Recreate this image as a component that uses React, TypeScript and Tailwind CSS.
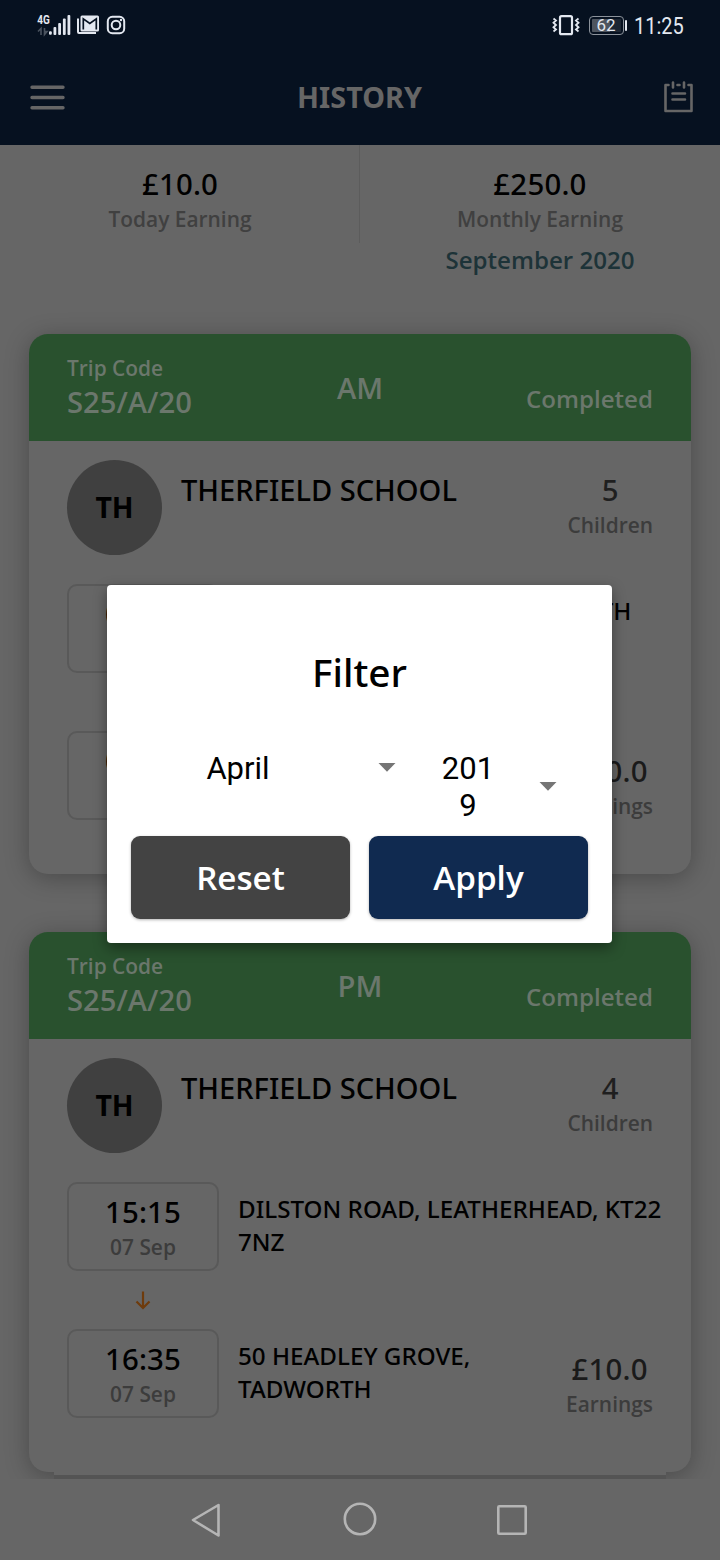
import type { ReactNode } from "react";

type Stop = { time: string; date: string; lines: string[]; indent?: boolean };
type Trip = { code: string; period: string; children: number; from: Stop; to: Stop };

const trips: Trip[] = [
  {
    code: "S25/A/20",
    period: "AM",
    children: 5,
    from: { time: "07:15", date: "07 Sep", lines: ["50 HEADLEY GROVE, TADWORTH"], indent: true },
    to: { time: "08:35", date: "07 Sep", lines: [] },
  },
  {
    code: "S25/A/20",
    period: "PM",
    children: 4,
    from: { time: "15:15", date: "07 Sep", lines: ["DILSTON ROAD, LEATHERHEAD, KT22", "7NZ"] },
    to: { time: "16:35", date: "07 Sep", lines: ["50 HEADLEY GROVE,", "TADWORTH"] },
  },
];

function StatusBar() {
  return (
    <div className="flex h-[50px] items-center justify-between pr-[36px] pl-[36px] text-[#e3e8f0]">
      <svg width="92" height="24" viewBox="36 13 92 24" fill="none">
        <text
          transform="translate(37.300 24.300) scale(0.8 1)"
          fill="#e3e8f0"
          fontFamily="Roboto"
          fontSize="12.5"
          fontWeight="700"
        >
          4G
        </text>
        <path d="M38 31.500l3-3v6.500M44.500 28v6.500l2.500-3h-2" stroke="#4a535f" strokeWidth="1.600" />
        <g fill="#e3e8f0">
          <rect x="49" y="31.200" width="2.800" height="3.600" rx="1" />
          <rect x="53.500" y="27" width="2.800" height="8" rx="1" />
          <rect x="58.200" y="23" width="2.800" height="12" rx="1" />
          <rect x="62.900" y="18.500" width="2.800" height="16.500" rx="1" />
          <rect x="67.500" y="15" width="2.800" height="20" rx="1" />
          <path d="M77 18.500h2v13.500h17v2H79a2 2 0 0 1-2-2z" />
          <rect x="80.500" y="15.500" width="18.500" height="16" rx="1.500" />
        </g>
        <path d="M83.300 29.500V18.800l6.500 4.700 6.500-4.700v10.700" stroke="#061120" strokeWidth="1.700" />
        <rect x="107.800" y="16.800" width="16.400" height="16.400" rx="4.500" stroke="#e3e8f0" strokeWidth="2" />
        <circle cx="116" cy="25" r="4.300" stroke="#e3e8f0" strokeWidth="2" />
        <circle cx="121" cy="20" r="1.200" fill="#e3e8f0" />
      </svg>
      <div className="flex items-center">
        <svg width="28" height="24" viewBox="0 0 28 24" fill="none" stroke="#e3e8f0">
          <rect x="8" y="3.200" width="12" height="18" rx="1.500" strokeWidth="2.200" />
          <path
            d="M1.500 5.500l2.500 2-2.500 2.300 2.500 2.200-2.500 2.300 2.500 2.200-2.500 2M26.500 5.500l-2.500 2 2.500 2.300-2.500 2.200 2.500 2.300-2.500 2.200 2.500 2"
            strokeWidth="1.800"
          />
        </svg>
        <div className="ml-[9px] flex h-[19px] w-[35px] items-center justify-center rounded-[4px] border border-[#8b929b] bg-[#1c2633] bg-[linear-gradient(90deg,#4e555f_62%,#1c2633_62%)] bg-clip-content p-[2px] font-['Roboto',sans-serif] text-[17px] leading-none">
          62
        </div>
        <div className="ml-[1px] h-[11px] w-[2.500px] rounded-[1px] bg-[#e3e8f0]" />
        <div className="mt-[2px] ml-[7px] w-[50px] font-['Roboto',sans-serif] text-[24px] leading-[28px] whitespace-nowrap">
          <span className="inline-block origin-left scale-x-[0.83]">11:25</span>
        </div>
      </div>
    </div>
  );
}

function Header() {
  return (
    <header className="h-[145px] bg-[#061120]">
      <StatusBar />
      <div className="grid h-[93px] grid-cols-[1fr_auto_1fr] items-center pr-[26px] pl-[30px]">
        <svg width="35" height="26" viewBox="0 0 35 26" stroke="#666" strokeWidth="3.400" strokeLinecap="round">
          <path d="M2 3.200h31M2 13.500h31M2 23.800h31" />
        </svg>
        <h1 className="mr-[1px] -ml-[1px] pr-[3px] text-[28.800px] leading-[38px] font-bold text-[#666]">HISTORY</h1>
        <svg
          className="-mt-[1px] justify-self-end"
          width="31"
          height="34"
          viewBox="0 0 31 34"
          fill="none"
          stroke="#666"
          strokeWidth="2.600"
          strokeLinecap="round"
          strokeLinejoin="round"
        >
          <path d="M5.500 6H2.500v26h26V6H25.500M14.500 6h2" />
          <path d="M10 3.500v5M21 3.500v5M9.500 14.500h12.500M9.500 20.500h12.500" />
        </svg>
      </div>
    </header>
  );
}

function Stat({ value, label, children }: { value: string; label: string; children?: ReactNode }) {
  return (
    <div className="flex w-[360px] flex-col items-center pt-[20px]">
      <div className="text-[29.400px] leading-[38px] font-medium tracking-[0.200px] text-black">{value}</div>
      <div className="mt-[1px] font-['Open_Sans',sans-serif] text-[20.900px] leading-[31px] font-semibold text-[#404040]">
        {label}
      </div>
      {children}
    </div>
  );
}

function Caption({ children }: { children: ReactNode }) {
  return (
    <div className="font-['Open_Sans',sans-serif] text-[20.900px] leading-[32px] font-semibold text-[#3c3c3c]">
      {children}
    </div>
  );
}

function StopRow({ stop, earnings }: { stop: Stop; earnings?: string }) {
  return (
    <div className="flex h-[89px]">
      <div className="flex w-[152px] shrink-0 flex-col items-center rounded-[10px] border-2 border-[#595959] pt-[9px]">
        <div className="text-[29.400px] leading-[38px] font-medium tracking-[0.200px] text-black">{stop.time}</div>
        <Caption>{stop.date}</Caption>
      </div>
      <div className={stop.indent ? "ml-[40px] pt-[10px]" : "ml-[19px] pt-[10px]"}>
        {stop.lines.map((line) => (
          <div key={line} className="text-[24.200px] leading-[33px] font-medium whitespace-nowrap text-black">
            {line}
          </div>
        ))}
      </div>
      {earnings && (
        <div className="ml-auto flex flex-col items-center pt-[21px]">
          <div className="text-[29.400px] leading-[38px] font-medium tracking-[0.200px] text-[#1a1a1a]">{earnings}</div>
          <Caption>Earnings</Caption>
        </div>
      )}
    </div>
  );
}

function TripCard({ trip }: { trip: Trip }) {
  return (
    <article className="h-[540px] shrink-0 overflow-hidden rounded-[19px] bg-[#666] shadow-[0_4px_24px_rgba(0,0,0,0.28)]">
      <div className="grid h-[107px] grid-cols-3 bg-[#29512e] px-[38px] font-['Open_Sans',sans-serif] font-semibold text-[#6b776c]">
        <div className="pt-[20px]">
          <div className="text-[20.900px] leading-[29px]">Trip Code</div>
          <div className="text-[29.200px] leading-[38px]">{trip.code}</div>
        </div>
        <div className="pt-[35px] text-center text-[29.200px] leading-[38px]">{trip.period}</div>
        <div className="pt-[48px] text-right text-[24.100px] leading-[34px]">Completed</div>
      </div>
      <div className="px-[38px] pt-[19px]">
        <div className="flex h-[124px]">
          <div className="flex size-[95px] items-center justify-center rounded-full bg-[#404040] pb-[1px] text-[28.500px] leading-[38px] font-bold text-black">
            TH
          </div>
          <div className="ml-[19px] pt-[11px] text-[29.050px] leading-[38px] font-medium text-black">
            THERFIELD SCHOOL
          </div>
          <div className="ml-auto flex flex-col items-center pt-[11px]">
            <div className="text-[29.400px] leading-[38px] font-medium text-[#1f1f1f]">{trip.children}</div>
            <Caption>Children</Caption>
          </div>
        </div>
        <StopRow stop={trip.from} />
        <div className="flex h-[58px] w-[152px] items-center justify-center">
          <svg width="16" height="20" viewBox="0 0 16 20" fill="none" stroke="#6e3b0c" strokeWidth="2.200">
            <path d="M8 1.500v16M1.500 11.500L8 18l6.500-6.500" />
          </svg>
        </div>
        <StopRow stop={trip.to} earnings="£10.0" />
      </div>
    </article>
  );
}

function Caret() {
  return (
    <svg width="18" height="9" viewBox="0 0 18 9" fill="#757575">
      <path d="M0.500 0h17L9 8.800z" />
    </svg>
  );
}

function FilterDialog() {
  return (
    <div
      role="dialog"
      className="absolute top-[585px] left-[107px] flex h-[358px] w-[505px] flex-col rounded-[4px] bg-white px-[24px] pt-[61px] shadow-[0_5px_14px_rgba(0,0,0,0.4)]"
    >
      <h2 className="text-center text-[38.800px] leading-[52px] font-medium text-black">Filter</h2>
      <div className="mt-[52px] flex h-[86px] font-['Roboto',sans-serif] text-[31px] leading-[37px] text-black">
        <div className="ml-[29px] w-[156px] text-center">April</div>
        <div className="mt-[13px] ml-[62px]">
          <Caret />
        </div>
        <div className="ml-[44px] w-[56px] text-center break-all">2019</div>
        <div className="mt-[32px] ml-[43px]">
          <Caret />
        </div>
      </div>
      <div className="flex gap-[19px] font-['Open_Sans',sans-serif] text-[33.200px] leading-[46px] font-semibold text-white">
        <button className="h-[83px] flex-1 rounded-[9px] bg-[#434343] shadow-[0_1px_3px_rgba(0,0,0,0.3)]">
          Reset
        </button>
        <button className="h-[83px] flex-1 rounded-[9px] bg-[#102a50] shadow-[0_1px_3px_rgba(0,0,0,0.3)]">
          Apply
        </button>
      </div>
    </div>
  );
}

function NavBar() {
  return (
    <nav className="flex h-[81px] items-center justify-center bg-[#666]">
      <svg
        width="340"
        height="36"
        viewBox="190 1502 340 36"
        fill="none"
        stroke="#b5b5b5"
        strokeWidth="2.600"
        strokeLinejoin="round"
      >
        <path d="M193 1520l25.500-15v30.500z" />
        <circle cx="360" cy="1519" r="15.200" />
        <rect x="498.300" y="1506.300" width="27.400" height="27.400" rx="1" />
      </svg>
    </nav>
  );
}

export default function App() {
  return (
    <div className="relative flex h-[1560px] w-[720px] flex-col overflow-hidden bg-[#666] font-['Noto_Sans',sans-serif]">
      <Header />
      <main className="flex h-[1334px] flex-col overflow-hidden">
        <section className="flex h-[189px] shrink-0">
          <Stat value="£10.0" label="Today Earning" />
          <div className="-ml-[1px] h-[98px] w-[1px] bg-[#5c5c5c]" />
          <Stat value="£250.0" label="Monthly Earning">
            <div className="mt-[8px] font-['Open_Sans',sans-serif] text-[24.100px] leading-[34px] font-semibold text-[#1d3338]">
              September 2020
            </div>
          </Stat>
        </section>
        <div className="flex shrink-0 flex-col gap-[58px] px-[29px]">
          {trips.map((trip) => (
            <TripCard key={trip.period} trip={trip} />
          ))}
        </div>
        <div className="mx-[54px] h-[7px] shrink-0 border-b-4 border-[#545454] bg-[#666]" />
      </main>
      <NavBar />
      <FilterDialog />
    </div>
  );
}
